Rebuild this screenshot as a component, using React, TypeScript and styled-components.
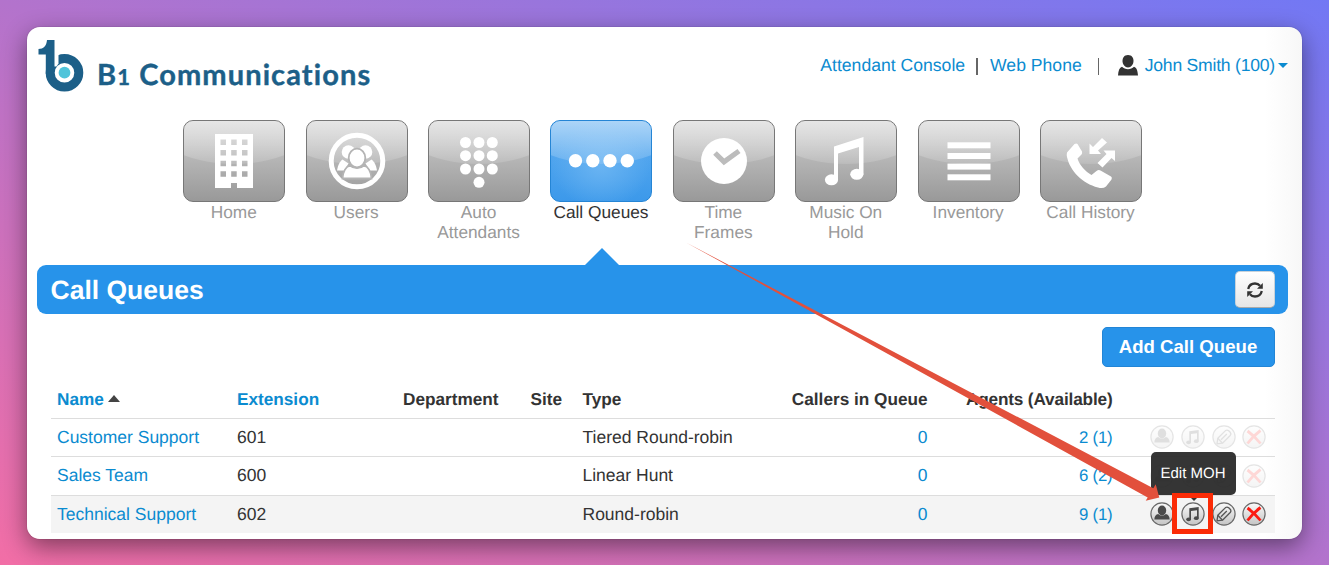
import React from 'react';
import styled, { createGlobalStyle } from 'styled-components';

const GlobalStyles = createGlobalStyle`
  * {
    box-sizing: border-box;
  }
  body {
    margin: 0;
    font-family: "Liberation Sans", Arial, Helvetica, sans-serif;
    font-size: 17.4px;
    color: #333;
    text-rendering: geometricPrecision;
  }
`;

const Backdrop = styled.div`
  width: 1329px;
  height: 565px;
  padding: 27px 27px 26px;
  overflow: hidden;
  background: linear-gradient(to top right, #f26ea6, #b373cc 50%, #7278f4);
`;

const Window = styled.div`
  position: relative;
  height: 512px;
  border-radius: 13px;
  padding: 0 14px 0 10px;
  background: linear-gradient(to right, #fff 1238px, #f7f7f7 1275px);
  box-shadow: 0 0 1px rgba(0, 0, 0, 0.5), 0 8px 24px rgba(0, 0, 0, 0.45);
`;

const Header = styled.header`
  display: flex;
  justify-content: space-between;
  align-items: flex-start;
  height: 93px;
`;

const Brand = styled.div`
  display: flex;
  padding: 13px 0 0 1px;
`;

const Wordmark = styled.div`
  margin: 15px 0 0 12px;
  font-family: Lato, sans-serif;
  font-weight: 700;
  font-size: 29px;
  line-height: 40px;
  letter-spacing: 1.1px;
  white-space: nowrap;
  color: #1c5f88;
  -webkit-text-stroke: 0.4px #1c5f88;

  small {
    font-size: 22px;
  }
`;

const UserLinks = styled.div`
  display: flex;
  align-items: center;
  margin-top: 26.5px;
  height: 24px;
  font-size: 17.6px;
  white-space: nowrap;
`;

const Link = styled.a`
  color: #0b8bd0;
  text-decoration: none;
`;

const UserName = styled(Link)`
  margin-left: 6.5px;
  letter-spacing: -0.23px;
`;

const Divider = styled.span<{ $left: number; $right: number }>`
  width: 1.5px;
  height: 17px;
  margin: 1px ${(p) => p.$right}px 0 ${(p) => p.$left}px;
  background: #666;
`;

const Caret = styled.span<{ $up?: boolean }>`
  display: inline-block;
  border-left: ${(p) => (p.$up ? 6 : 5)}px solid transparent;
  border-right: ${(p) => (p.$up ? 6 : 5)}px solid transparent;
  ${(p) => (p.$up ? 'border-bottom: 7px solid #444;' : 'border-top: 5px solid #0b8bd0;')}
  margin-left: ${(p) => (p.$up ? 4 : 3)}px;
  vertical-align: ${(p) => (p.$up ? 3 : 0)}px;
`;

const Nav = styled.nav`
  display: flex;
  gap: 20.4px;
  height: 145px;
  padding-left: 146.3px;
`;

const NavItem = styled.div<{ $active?: boolean }>`
  position: relative;
  width: 102px;
  flex: none;
  text-align: center;
  color: ${(p) => (p.$active ? '#333' : '#999')};

  ${(p) =>
    p.$active &&
    `&::after {
      content: '';
      position: absolute;
      left: 35px;
      bottom: 0;
      border: 17.5px solid transparent;
      border-top: 0;
      border-bottom: 17px solid #2793ea;
    }`}
`;

const Tile = styled.div<{ $active?: boolean }>`
  position: relative;
  height: 82px;
  overflow: hidden;
  border-radius: 10px;
  border: 1px solid ${(p) => (p.$active ? '#2585d5' : '#777')};
  background: ${(p) =>
    p.$active
      ? 'radial-gradient(ellipse at 50% 55%, #6ab4f2, transparent 70%), linear-gradient(#60aef1, #3c99ea)'
      : 'linear-gradient(#cfcfcf, #999)'};

  /* glossy highlight over the top half */
  &::before {
    content: '';
    position: absolute;
    left: -40px;
    right: -40px;
    top: -60px;
    height: 103px;
    border-radius: 50%;
    background: linear-gradient(rgba(255, 255, 255, 0.48) 58%, rgba(255, 255, 255, 0.12));
  }

  svg {
    position: relative;
    display: block;
    width: 100px;
    height: 80px;
  }
`;

const NavLabel = styled.div`
  margin: 1px 0 0 -1px;
  font-size: 17.3px;
  line-height: 19.5px;
  white-space: pre;
`;

const TitleBar = styled.div`
  display: flex;
  align-items: center;
  justify-content: space-between;
  height: 49px;
  padding: 0 13.5px;
  border-radius: 9px;
  background: #2793ea;
`;

const Title = styled.h1`
  margin: 0;
  font-size: 26.5px;
  line-height: 32px;
  color: #fff;
`;

const RefreshButton = styled.button`
  display: flex;
  align-items: center;
  justify-content: center;
  width: 40px;
  height: 37px;
  padding: 0;
  border: 1px solid #c8d2da;
  border-bottom-color: #aaa;
  border-radius: 5px;
  background: linear-gradient(#fff, #e6e6e6);
`;

const Toolbar = styled.div`
  display: flex;
  justify-content: flex-end;
  padding: 13px 13.5px 0 0;
`;

const AddButton = styled.button`
  width: 173px;
  height: 40px;
  padding: 0;
  border: 1px solid #2285d6;
  border-radius: 5px;
  background: #2793ea;
  color: #fff;
  font: bold 18.6px "Liberation Sans", Arial, sans-serif;
`;

const Table = styled.div`
  margin: 13.5px 13.5px 0;
`;

const Row = styled.div<{ $head?: boolean; $hover?: boolean }>`
  display: grid;
  grid-template-columns: 180px 166px 127.5px 52px 197.5px 160px 185px 1fr;
  align-items: center;
  height: ${(p) => (p.$head ? 37 : 38.5)}px;
  border-top: ${(p) => (p.$head ? 0 : '1px solid #ddd')};
  font-weight: ${(p) => (p.$head ? 'bold' : 'normal')};
  font-size: ${(p) => (p.$head ? 17.2 : 17.5)}px;
  background: ${(p) => (p.$hover ? '#f4f4f4' : 'transparent')};
`;

const Cell = styled.div<{ $right?: boolean }>`
  padding: 0 ${(p) => (p.$right ? 6 : 6.5)}px;
  white-space: nowrap;
  text-align: ${(p) => (p.$right ? 'right' : 'left')};
`;

const AgentsHeading = styled.span`
  letter-spacing: -0.15px;
`;

const Agents = styled(Link)`
  font-size: 16.8px;
  letter-spacing: -0.2px;
`;

const Actions = styled.div<{ $faded: boolean }>`
  display: flex;
  gap: 6.7px;
  padding-left: 31.8px;
  opacity: ${(p) => (p.$faded ? 0.17 : 1)};

  svg {
    display: block;
    flex: none;
  }
`;

const Tooltip = styled.div`
  position: absolute;
  left: 1123.5px;
  top: 425px;
  width: 85px;
  height: 43px;
  border-radius: 5px;
  background: rgba(38, 38, 38, 0.93);
  color: #fff;
  font-size: 15px;
  line-height: 43px;
  text-align: center;

  &::after {
    content: '';
    position: absolute;
    left: 37px;
    top: 43px;
    border: 6px solid transparent;
    border-bottom: 0;
    border-top-color: #333;
  }
`;

const Highlight = styled.div`
  position: absolute;
  left: 1145px;
  top: 466px;
  width: 41px;
  height: 41px;
  border: 5px solid #fb2b06;
`;

const Pointer = styled.svg`
  position: absolute;
  left: 0;
  top: 0;
  pointer-events: none;
`;

const BuildingIcon = () => (
  <svg viewBox="0 0 100 80">
    <path fill="#fff" fillRule="evenodd" d="M31 13h38v54H53v-5h-6v5H31z
      M36.500 18.500v5.500h5.500v-5.500zM47.200 18.500v5.500h5.500v-5.500zM58 18.500v5.500h5.500v-5.500z
      M36.500 29v5.500h5.500v-5.500zM47.200 29v5.500h5.500v-5.500zM58 29v5.500h5.500v-5.500z
      M36.500 39.700v5.500h5.500v-5.500zM47.200 39.700v5.500h5.500v-5.500zM58 39.700v5.500h5.500v-5.500z
      M36.500 50.300v5.500h5.500v-5.500zM47.200 50.300v5.500h5.500v-5.500zM58 50.300v5.500h5.500v-5.500z" />
  </svg>
);

const UsersIcon = () => (
  <svg viewBox="0 0 100 80">
    <circle cx="50" cy="40" r="25.800" fill="none" stroke="#fff" strokeWidth="5" />
    <g fill="#fff">
      <circle cx="41.500" cy="31" r="6.800" />
      <circle cx="58.500" cy="31" r="6.800" />
      <path d="M30 49.500c1-6 3-9 5.500-11l6 4-4.500 7z" />
      <path d="M70 49.500c-1-6-3-9-5.500-11l-6 4 4.500 7z" />
    </g>
    <g fill="#fff" stroke="#b4b4b4" strokeWidth="1.800">
      <path d="M35.500 57.500c.5-7 3-11.500 7.500-13 4 3.500 10 3.500 14 0 4.500 1.500 7 6 7.500 13z" />
      <ellipse cx="50" cy="37" rx="8.300" ry="9.300" />
    </g>
  </svg>
);

const KeypadIcon = () => (
  <svg viewBox="0 0 100 80" fill="#fff">
    {[21.5, 34.7, 48].map((y) =>
      [36.5, 50, 63.3].map((x) => <circle key={`${x}-${y}`} cx={x} cy={y} r="5.5" />)
    )}
    <circle cx="50" cy="61.3" r="5.5" />
  </svg>
);

const DotsIcon = () => (
  <svg viewBox="0 0 100 80" fill="#fff">
    {[24.5, 41.8, 59, 76.3].map((x) => (
      <circle key={x} cx={x} cy="39.800" r="6.7" />
    ))}
  </svg>
);

const ClockIcon = () => (
  <svg viewBox="0 0 100 80">
    <circle cx="50" cy="40" r="23" fill="#fff" />
    <path d="M41 32l9 8.800L65 30" fill="none" stroke="#bcbcbc" strokeWidth="5.200" />
  </svg>
);

const MusicIcon = () => (
  <svg viewBox="0 0 100 80" fill="#fff">
    <path d="M38 25.500L67.500 16v37.500H63V26L42 32.500v26.500h-4z" />
    <ellipse cx="35.500" cy="58.800" rx="6.600" ry="5.500" />
    <ellipse cx="60.800" cy="53.300" rx="6.600" ry="5.500" />
  </svg>
);

const ListIcon = () => (
  <svg viewBox="0 0 100 80" fill="#fff">
    {[21.3, 32, 42.6, 53.3].map((y) => (
      <rect key={y} x="28.500" y={y} width="43" height="6" />
    ))}
  </svg>
);

const CallIcon = () => (
  <svg viewBox="0 0 100 80" fill="#fff">
    <path d="M26 31.500l7.500-8.500q2-1 3 0l4.500 7.500q.5 2-.5 3l-4 4c2 7 8 13 14 16.500l5-4q2-1.500 4-.5l10.500 6q1.500 1 .5 3l-5.500 7q-3 2.500-8 1C41.500 62.500 29 50 26 36q-.5-2.500 0-4.500z" />
    <path d="M48.500 33V22.500L52 26l9-9 5 4.500-9 8 3 3.500z" />
    <path d="M74 29.500V40l-3.500-3-9 9.500-5-4.500 9-9-3-3.500z" />
  </svg>
);

const PersonIcon = () => (
  <svg width="20" height="21" viewBox="0 0 20 21" fill="#333">
    <path d="M10 0c4 0 5.500 3 5.500 6 0 3.500-2.500 6.500-5.500 6.500S4.500 9.500 4.500 6C4.500 3 6 0 10 0z" />
    <path d="M0 20.500c.3-5 1.500-8 4-8.800 3 3.300 9 3.300 12 0 2.500.8 3.700 3.800 4 8.800z" />
  </svg>
);

const LogoIcon = () => (
  <svg width="47" height="53" viewBox="38 40 47 53">
    <circle cx="64.500" cy="72.700" r="14.300" fill="none" stroke="#1c5f88" strokeWidth="9" />
    <path fill="#fff" d="M54 50h4.500v13.500l-2 3h-2.500z" />
    <path fill="#1c5f88" d="M47 40h7.500v30l-1 4h-7.700V54.500h-7.300V49c5 0 8-3 8.500-9z" />
    <circle cx="64.500" cy="72.700" r="5.900" fill="#4fc4da" />
  </svg>
);

const RefreshIcon = () => (
  <svg width="18" height="18" viewBox="0 0 18 18">
    <path d="M2.200 8C3 4.500 5.500 2.500 9 2.500c2.200 0 3.800.8 5 2.300M15.800 10c-.8 3.500-3.300 5.500-6.800 5.500-2.200 0-3.800-.8-5-2.300" fill="none" stroke="#333" strokeWidth="2.300" />
    <path d="M16.800 2v5.800H11zM1.200 16v-5.800H7z" fill="#333" />
  </svg>
);

const glyphs = {
  person: (
    <g fill="#4a4a4a">
      <ellipse cx="12" cy="8.500" rx="4.200" ry="4.900" />
      <path d="M4.300 17.500c.2-3.300 1.500-5 4-5.500 2 2 5.400 2 7.400 0 2.500.5 3.800 2.200 4 5.500z" />
    </g>
  ),
  music: (
    <g fill="#4a4a4a">
      <path d="M8.300 6.200l9.400-1.200v11h-1.700V8.200l-6 .9V17.500H8.300z" />
      <ellipse cx="7.600" cy="17.300" rx="2.400" ry="1.900" />
      <ellipse cx="15.300" cy="16.200" rx="2.400" ry="1.900" />
    </g>
  ),
  pencil: (
    <g fill="none" stroke="#555" strokeWidth="1.300" strokeLinejoin="round">
      <path d="M5 18.800l.8-5.500L13.500 5.600q1.600-1.200 3.200.2l1.500 1.500q1.400 1.600 0 3.200l-7.700 7.700z" />
      <path d="M5.800 13.300l4.700 4.900M9 14.800l5.800-5.800" />
    </g>
  ),
  remove: <path d="M5.500 6q7 5 13 12.500M18.500 5.500Q11 11 5.500 18.500" fill="none" stroke="#fb1b12" strokeWidth="2.800" />,
};

const RoundIcon = ({ name }: { name: keyof typeof glyphs }) => (
  <svg width="24" height="24" viewBox="0 0 24 24">
    <defs>
      <linearGradient id="knob" x1="0" y1="0" x2="0" y2="1">
        <stop offset="0" stopColor="#fafafa" />
        <stop offset="1" stopColor="#c4c4c4" />
      </linearGradient>
    </defs>
    <circle cx="12" cy="12" r="11.100" fill="url(#knob)" stroke="#686868" strokeWidth="1.200" />
    {glyphs[name]}
  </svg>
);

const navItems = [
  { label: 'Home', icon: <BuildingIcon /> },
  { label: 'Users', icon: <UsersIcon /> },
  { label: 'Auto\nAttendants', icon: <KeypadIcon /> },
  { label: 'Call Queues', icon: <DotsIcon />, active: true },
  { label: 'Time\nFrames', icon: <ClockIcon /> },
  { label: 'Music On\nHold', icon: <MusicIcon /> },
  { label: 'Inventory', icon: <ListIcon /> },
  { label: 'Call History', icon: <CallIcon /> },
];

const queues = [
  { name: 'Customer Support', ext: '601', type: 'Tiered Round-robin', callers: '0', agents: '2 (1)' },
  { name: 'Sales Team', ext: '600', type: 'Linear Hunt', callers: '0', agents: '6 (2)' },
  { name: 'Technical Support', ext: '602', type: 'Round-robin', callers: '0', agents: '9 (1)', hover: true },
];

function App() {
  return (
    <Backdrop>
      <GlobalStyles />
      <Window>
        <Header>
          <Brand>
            <LogoIcon />
            <Wordmark>B<small>1</small> Communications</Wordmark>
          </Brand>
          <UserLinks>
            <Link>Attendant Console</Link>
            <Divider $left={11} $right={12.5} />
            <Link>Web Phone</Link>
            <Divider $left={16} $right={19} />
            <PersonIcon />
            <UserName>John Smith (100)</UserName>
            <Caret />
          </UserLinks>
        </Header>

        <Nav>
          {navItems.map((item) => (
            <NavItem key={item.label} $active={item.active}>
              <Tile $active={item.active}>{item.icon}</Tile>
              <NavLabel>{item.label}</NavLabel>
            </NavItem>
          ))}
        </Nav>

        <TitleBar>
          <Title>Call Queues</Title>
          <RefreshButton aria-label="Refresh">
            <RefreshIcon />
          </RefreshButton>
        </TitleBar>
        <Toolbar>
          <AddButton>Add Call Queue</AddButton>
        </Toolbar>

        <Table>
          <Row $head>
            <Cell><Link>Name</Link><Caret $up /></Cell>
            <Cell><Link>Extension</Link></Cell>
            <Cell>Department</Cell>
            <Cell>Site</Cell>
            <Cell>Type</Cell>
            <Cell $right>Callers in Queue</Cell>
            <Cell $right><AgentsHeading>Agents (Available)</AgentsHeading></Cell>
          </Row>
          {queues.map((q) => (
            <Row key={q.ext} $hover={q.hover}>
              <Cell><Link>{q.name}</Link></Cell>
              <Cell>{q.ext}</Cell>
              <Cell />
              <Cell />
              <Cell>{q.type}</Cell>
              <Cell $right><Link>{q.callers}</Link></Cell>
              <Cell $right><Agents>{q.agents}</Agents></Cell>
              <Actions $faded={!q.hover}>
                <RoundIcon name="person" />
                <RoundIcon name="music" />
                <RoundIcon name="pencil" />
                <RoundIcon name="remove" />
              </Actions>
            </Row>
          ))}
        </Table>

        <Tooltip>Edit MOH</Tooltip>
        <Highlight />
        <Pointer width="1275" height="512" viewBox="27 27 1275 512">
          <path fill="#e2503c" d="M686 242.500L1153.300 488.300 1155.700 484.300 1159.300 497.500 1145.700 500.700 1147.700 497.500z" />
        </Pointer>
      </Window>
    </Backdrop>
  );
}

export default App;
